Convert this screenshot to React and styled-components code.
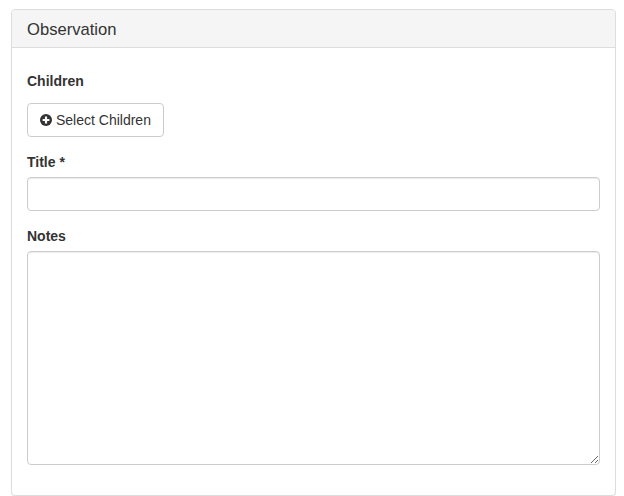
import React from "react";
import styled, { createGlobalStyle } from "styled-components";

const GlobalStyle = createGlobalStyle`
  html, body {
    margin: 0;
    padding: 0;
    background: #fff;
  }
  body {
    font-family: "Liberation Sans", Arial, sans-serif;
    font-size: 14px;
    line-height: 20px;
    color: #333;
  }
`;

const Page = styled.div`
  box-sizing: border-box;
  width: 624px;
  height: 496px;
  padding: 9px 8px 0 11px;
  overflow: hidden;
`;

const Panel = styled.section`
  box-sizing: border-box;
  height: 487px;
  background: #fff;
  border: 1px solid #ddd;
  border-radius: 4px;
  box-shadow: 0 1px 1px rgba(0, 0, 0, 0.05);
`;

const PanelHeading = styled.header`
  box-sizing: border-box;
  height: 38px;
  padding: 11px 15px 0;
  background: #f5f5f5;
  border-bottom: 1px solid #ddd;
  border-radius: 3px 3px 0 0;
`;

const PanelTitle = styled.h3`
  margin: 0;
  font-size: 16.6px;
  font-weight: 400;
  line-height: 18px;
  color: #333;
`;

const PanelBody = styled.div`
  padding: 23px 15px 0;
`;

const FormGroup = styled.div`
  margin-bottom: 15px;
`;

const Label = styled.label`
  display: block;
  margin-bottom: 5px;
  font-weight: 700;
`;

const Button = styled.button`
  display: inline-flex;
  align-items: center;
  gap: 4px;
  box-sizing: border-box;
  height: 34px;
  margin-top: 7px;
  padding: 0 12px;
  background: #fff;
  border: 1px solid #ccc;
  border-radius: 4px;
  font: inherit;
  color: #333;
`;

const Input = styled.input`
  display: block;
  box-sizing: border-box;
  width: 100%;
  height: 34px;
  padding: 6px 12px;
  background: #fff;
  border: 1px solid #ccc;
  border-radius: 4px;
  box-shadow: inset 0 1px 1px rgba(0, 0, 0, 0.075);
  font: inherit;
  outline: none;
`;

const TextArea = styled(Input).attrs({ as: "textarea" })`
  height: 214px;
  resize: vertical;
`;

const PlusIcon = () => (
  <svg width="12" height="12" viewBox="0 0 12 12" aria-hidden="true">
    <circle cx="6" cy="6" r="6" fill="#333" />
    <path d="M6 2.6v6.8M2.6 6h6.8" stroke="#fff" strokeWidth="2.2" />
  </svg>
);

export default function App() {
  return (
    <Page>
      <GlobalStyle />
      <Panel>
        <PanelHeading>
          <PanelTitle>Observation</PanelTitle>
        </PanelHeading>
        <PanelBody>
          <FormGroup>
            <Label>Children</Label>
            <Button type="button">
              <PlusIcon />
              Select Children
            </Button>
          </FormGroup>
          <FormGroup>
            <Label htmlFor="title">Title *</Label>
            <Input id="title" type="text" />
          </FormGroup>
          <FormGroup>
            <Label htmlFor="notes">Notes</Label>
            <TextArea id="notes" />
          </FormGroup>
        </PanelBody>
      </Panel>
    </Page>
  );
}
